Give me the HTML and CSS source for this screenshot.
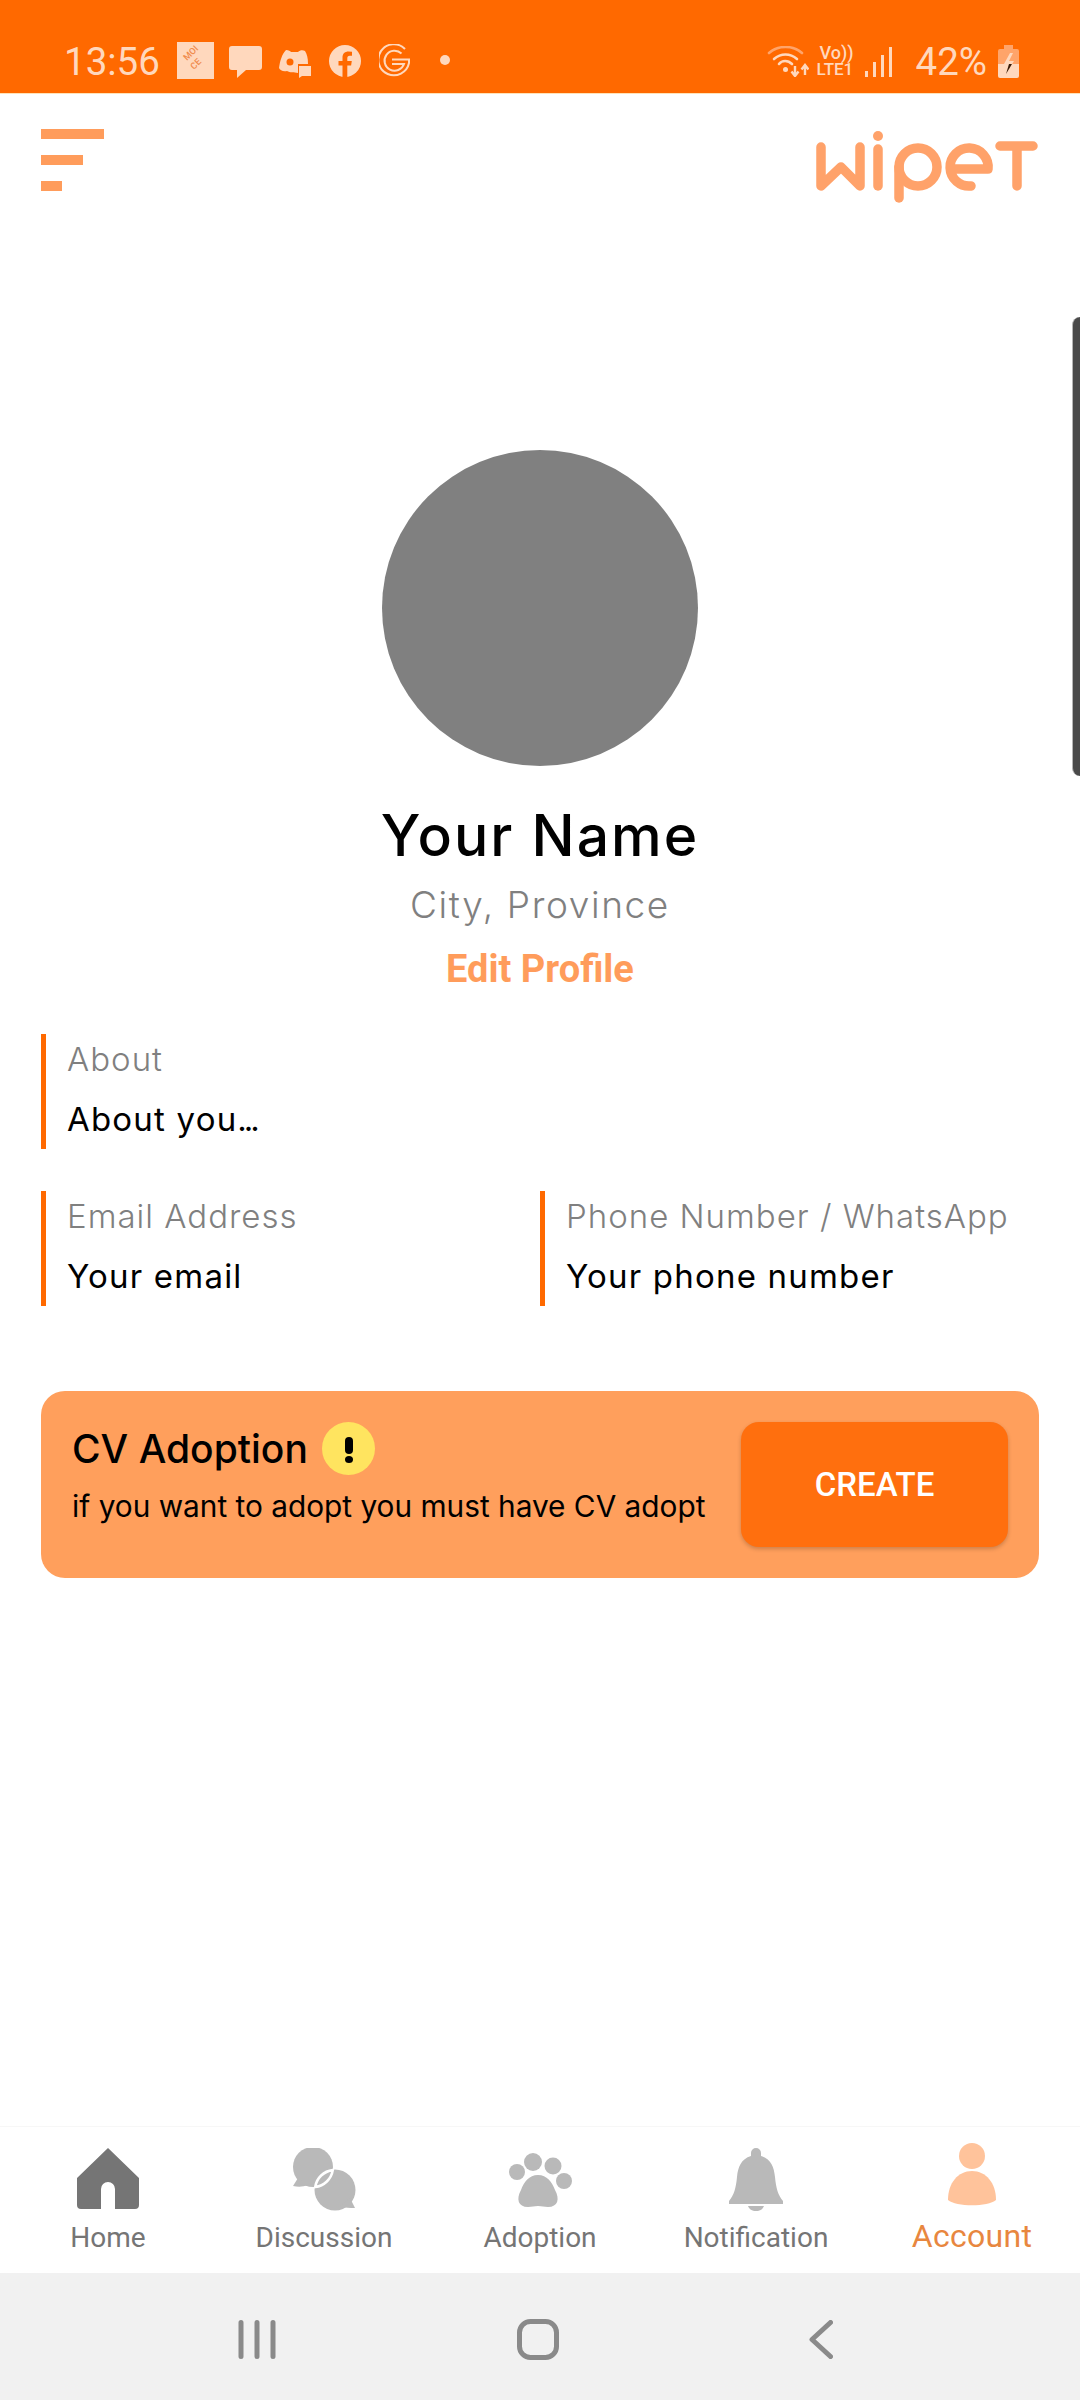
FILE: index.html
```html
<!DOCTYPE html>
<html>
    <head>
        <meta charset="utf-8">
        <title>Wipet Account</title>
        <link rel="stylesheet" href="styles.css">
    </head>
    <body>
        <div class="statusbar">
            <div class="status-left">
                <span class="clock">13:56</span>
                <svg class="ic-moi" width="37" height="37" viewBox="0 0 37 37">
                    <rect width="37" height="37" fill="#FFD8BD"/>
                    <g fill="#F08A4B" font-family="Roboto, sans-serif" font-weight="500" font-size="9">
                        <text transform="translate(10 19) rotate(-45)">MOI</text>
                        <text transform="translate(17 28) rotate(-45)">CE</text>
                    </g>
                </svg>
                <svg class="ic-msg" width="33" height="32" viewBox="0 0 33 32">
                    <path d="M3 0H30a3 3 0 0 1 3 3V21a3 3 0 0 1-3 3H17L8 32V24H3a3 3 0 0 1-3-3V3a3 3 0 0 1 3-3z" fill="#FFD8BD"/>
                </svg>
                <svg class="ic-discord" width="32" height="28" viewBox="0 0 32 28">
                    <path d="M7 0C10 0 11 1 12 2H19C21 0 24 0 26 1C28 4 29 8 29 14H19V23C15 22 11 23 8 21C4 22 1 20 0 18C1 11 3 4 7 0z" fill="#FFD8BD"/>
                    <circle cx="11" cy="12" r="3.500" fill="#FF6900"/>
                    <path d="M20 16H32V26H23L20 28z" fill="#FFD8BD"/>
                </svg>
                <svg class="ic-fb" width="32" height="32" viewBox="0 0 32 32">
                    <circle cx="16" cy="16" r="16" fill="#FFD8BD"/>
                    <path d="M13.500 32V20.500H9.500V16H13.500V12.500C13.500 8.500 16 6.500 19.500 6.500L23 6.800V10.800H20.800C18.800 10.800 18.300 11.800 18.300 13.200V16H22.800L22.100 20.500H18.300V32z" fill="#FF6900"/>
                </svg>
                <svg class="ic-g" width="31" height="34" viewBox="0 0 31 34">
                    <g fill="none" stroke="#FFD8BD" stroke-width="2">
                        <path d="M26 5A15.500 15.500 0 1 0 30 19V15.500H13"/>
                        <path d="M22.500 9.500A10 10 0 1 0 25 20H13"/>
                    </g>
                </svg>
                <span class="notif-dot"></span>
            </div>
            <div class="status-right">
                <svg class="ic-wifi" width="42" height="31" viewBox="0 0 42 31">
                    <g fill="none" stroke-width="2.600" stroke-linecap="round">
                        <path d="M2 7C11-1 26-1 35 7" stroke="#FFA46A"/>
                        <path d="M7 13C14 7 23 7 30 13" stroke="#FFD8BD"/>
                        <path d="M12 18C15 14 21 14 25 18" stroke="#FFD8BD"/>
                    </g>
                    <circle cx="18.500" cy="23.500" r="2.500" fill="#FFD8BD"/>
                    <path d="M28 20V29M24.500 25.500L28 30L31.500 25.500M38 29V20M34.500 23.500L38 19L41.500 23.500" fill="none" stroke="#FFD8BD" stroke-width="2.400"/>
                </svg>
                <div class="volte">
                    <span class="volte-top">Vo))</span>
                    <span class="volte-bot">LTE1</span>
                </div>
                <div class="signal">
                    <i class="sig1"></i><i class="sig2"></i><i class="sig3"></i><i class="sig4"></i>
                </div>
                <span class="battery-pct">42%</span>
                <svg class="ic-batt" width="21" height="33" viewBox="0 0 21 33">
                    <path d="M6 0H15V4H19a2 2 0 0 1 2 2V19H0V6a2 2 0 0 1 2-2H6z" fill="#FFA46A"/>
                    <path d="M0 19H21V31a2 2 0 0 1-2 2H2a2 2 0 0 1-2-2z" fill="#FFD8BD"/>
                    <path d="M12 8L6 19H11L8 29L16 16H11L15 8z" fill="#FFD8BD"/>
                    <path d="M11 19L8 29L14 19z" fill="#3A1C08"/>
                </svg>
            </div>
        </div>

        <div class="topbar">
            <div class="menu-btn">
                <span class="menu-line line-a"></span>
                <span class="menu-line line-b"></span>
                <span class="menu-line line-c"></span>
            </div>
            <!-- logo -->
            <svg class="logo" width="230" height="85" viewBox="810 130 230 85">
                <g fill="none" stroke="#FFA26A" stroke-width="9.500" stroke-linecap="round" stroke-linejoin="round">
                    <path d="M821 152V191L841 172L860 191V152"/>
                    <path d="M878 154V191"/>
                    <circle cx="918" cy="172" r="19"/>
                    <path d="M899 172V203"/>
                    <path d="M951 174H988A19 19 0 1 0 971 191"/>
                    <path d="M1000 151H1033M1017 151V191"/>
                </g>
                <circle cx="878" cy="141" r="5" fill="#FFA26A"/>
            </svg>
        </div>

        <div class="edge-handle"></div>

        <div class="profile">
            <div class="avatar"></div>
            <div class="name">Your Name</div>
            <div class="city">City, Province</div>
            <div class="edit">Edit Profile</div>
        </div>

        <div class="fields">
            <div class="field field-wide">
                <div class="field-label">About</div>
                <div class="field-value">About you<span class="dots">...</span></div>
            </div>
            <div class="field">
                <div class="field-label">Email Address</div>
                <div class="field-value">Your email</div>
            </div>
            <div class="field">
                <div class="field-label">Phone Number / WhatsApp</div>
                <div class="field-value">Your phone number</div>
            </div>
        </div>

        <div class="cv-card">
            <div class="cv-text">
                <div class="cv-title">
                    CV Adoption
                    <span class="cv-warn"><i class="warn-bar"></i><i class="warn-dot"></i></span>
                </div>
                <div class="cv-desc">if you want to adopt you must have CV adopt</div>
            </div>
            <div class="cv-btn">CREATE</div>
        </div>

        <div class="spacer"></div>

        <div class="bottomnav">
            <div class="navitem">
                <div class="navicon">
                    <svg width="62" height="61" viewBox="0 0 62 61">
                        <path d="M31 0L62 30V57a4 4 0 0 1-4 4H38V41a7 7 0 0 0-14 0V61H4a4 4 0 0 1-4-4V30z" fill="#757575"/>
                    </svg>
                </div>
                <span class="navlabel">Home</span>
            </div>
            <div class="navitem">
                <div class="navicon">
                    <svg width="64" height="63" viewBox="0 0 64 63">
                        <g fill="#B9B9B9">
                            <circle cx="21" cy="19" r="20"/>
                            <path d="M6 30L1 38C6 39 11 39 16 37z"/>
                            <circle cx="43" cy="42" r="20.500"/>
                            <path d="M58 50L63 60C58 60 53 60 48 58z"/>
                        </g>
                        <path d="M40.750 22.100A20 20 0 0 1 23.250 38.900A20 20 0 0 1 40.750 22.100z" fill="#B9B9B9" stroke="#FFFFFF" stroke-width="2.600"/>
                    </svg>
                </div>
                <span class="navlabel">Discussion</span>
            </div>
            <div class="navitem">
                <div class="navicon">
                    <svg class="paw" width="65" height="55" viewBox="0 0 65 55">
                        <g fill="#B9B9B9">
                            <circle cx="9" cy="20" r="8"/>
                            <circle cx="25" cy="10" r="9"/>
                            <circle cx="45" cy="14" r="8.500"/>
                            <circle cx="56" cy="29" r="8"/>
                            <path d="M30 23C39 23 44 30 47 38C52 47 50 55 40 55C36 55 34 54 30 54C26 54 24 55 20 55C10 55 8 47 13 38C16 30 21 23 30 23z"/>
                        </g>
                    </svg>
                </div>
                <span class="navlabel">Adoption</span>
            </div>
            <div class="navitem">
                <div class="navicon">
                    <svg width="54" height="63" viewBox="0 0 54 63">
                        <g fill="#B9B9B9">
                            <path d="M22 5a5 5 0 0 1 10 0V8C42 11 45 19 46 29C47 40 49 47 54 53V56H0V53C5 47 7 40 8 29C9 19 12 11 22 8z"/>
                            <path d="M19 58H35C34 61 31 63 27 63C23 63 20 61 19 58z"/>
                        </g>
                    </svg>
                </div>
                <span class="navlabel">Notification</span>
            </div>
            <div class="navitem navitem-on">
                <div class="navicon">
                    <svg class="person" width="48" height="63" viewBox="0 0 48 63">
                        <g fill="#FFC39B">
                            <circle cx="24" cy="13" r="13"/>
                            <path d="M24 28C38 28 48 40 48 57C40 64 8 64 0 57C0 40 10 28 24 28z"/>
                        </g>
                    </svg>
                </div>
                <span class="navlabel">Account</span>
            </div>
        </div>

        <div class="sysbar">
            <svg class="sys-recent" width="38" height="39" viewBox="0 0 38 39">
                <path d="M3 2.500V36.500M19 2.500V36.500M35 2.500V36.500" stroke="#8A8A8A" stroke-width="5" stroke-linecap="round"/>
            </svg>
            <svg class="sys-home" width="42" height="41" viewBox="0 0 42 41">
                <rect x="2.500" y="2.500" width="37" height="36" rx="11" fill="none" stroke="#8A8A8A" stroke-width="5"/>
            </svg>
            <svg class="sys-back" width="24" height="39" viewBox="0 0 24 39">
                <path d="M21.500 2.500L3 19.500L21.500 36.500" fill="none" stroke="#8A8A8A" stroke-width="5" stroke-linecap="round" stroke-linejoin="round"/>
            </svg>
        </div>
    </body>
</html>
```

FILE: styles.css
```css
html, body {
    margin: 0;
    padding: 0;
}

body {
    width: 1080px;
    height: 2400px;
    display: flex;
    flex-direction: column;
    position: relative;
    overflow: hidden;
    background-color: #FFFFFF;
    font-family: "Inter", "Liberation Sans", sans-serif;
    color: #000000;
}

/* status bar */
.statusbar {
    height: 94px;
    flex: none;
    background-color: #FF6900;
    border-bottom: 1px solid #FFE3B8;
    box-sizing: border-box;
    padding: 42px 61px 0 64px;
    display: flex;
    justify-content: space-between;
    align-items: flex-start;
    font-family: "Roboto", sans-serif;
    color: #FFD8BD;
}

.status-left, .status-right {
    display: flex;
    align-items: center;
    height: 40px;
}

.clock {
    font-size: 38.500px;
    width: 113px;
    line-height: 40px;
}

.ic-moi { margin-bottom: 3px; }
.ic-msg { margin-left: 15px; }
.ic-discord { margin-left: 17px; margin-top: 3px; }
.ic-fb { margin-left: 18px; margin-bottom: 3px; }
.ic-g { margin-left: 18px; margin-bottom: 2px; }

.notif-dot {
    width: 10px;
    height: 10px;
    border-radius: 50%;
    background-color: #FFD8BD;
    margin-left: 30px;
    margin-bottom: 4px;
}

.ic-wifi { margin-bottom: 2px; }

.volte {
    margin-left: 8px;
    width: 40px;
    display: flex;
    flex-direction: column;
    font-weight: 500;
    line-height: 16px;
    margin-bottom: 2px;
}

.volte-top {
    font-size: 18px;
    padding-left: 3px;
}

.volte-bot {
    font-size: 17px;
}

.signal {
    display: flex;
    align-items: flex-end;
    gap: 5px;
    height: 30px;
    margin-left: 8px;
}

.signal i {
    display: block;
    width: 3px;
    background-color: #FFD8BD;
}

.sig1 { height: 6px; }
.sig2 { height: 15px; }
.sig3 { height: 22px; }
.sig4 { height: 30px; }

.battery-pct {
    font-size: 38.500px;
    margin-left: 24px;
    line-height: 40px;
}

.ic-batt { margin-left: 11px; margin-bottom: 2px; }

/* top bar */
.topbar {
    flex: none;
    display: flex;
    justify-content: space-between;
    align-items: flex-start;
    padding: 35px 40px 0 41px;
    height: 203px;
    box-sizing: border-box;
}

.menu-btn {
    display: flex;
    flex-direction: column;
    gap: 16px;
}

.menu-line {
    display: block;
    height: 10px;
    background-color: #FF9C5B;
}

.line-a { width: 63px; }
.line-b { width: 42px; }
.line-c { width: 21px; }

.logo {
    margin-top: -4px;
}

/* edge panel handle */
.edge-handle {
    position: absolute;
    top: 317px;
    right: 0;
    width: 8px;
    height: 459px;
    background-color: #4A4A4A;
    border-left: 1px solid #B5B5B5;
    border-radius: 10px 0 0 10px;
    box-sizing: border-box;
}

/* profile head */
.profile {
    flex: none;
    display: flex;
    flex-direction: column;
    align-items: center;
    padding-top: 153px;
}

.avatar {
    width: 316px;
    height: 316px;
    border-radius: 50%;
    background-color: #808080;
}

.name {
    font-size: 57px;
    font-weight: 500;
    line-height: 68px;
    margin-top: 36px;
    letter-spacing: 2px;
}

.city {
    font-size: 37px;
    font-weight: 300;
    color: #808080;
    line-height: 46px;
    margin-top: 12px;
    letter-spacing: 1.6px;
}

.edit {
    font-family: "Roboto", sans-serif;
    font-size: 38px;
    font-weight: 700;
    color: #FF9C5B;
    line-height: 44px;
    margin-top: 19px;
}

/* info fields */
.fields {
    flex: none;
    display: grid;
    grid-template-columns: 499px 499px;
    row-gap: 42px;
    padding: 43px 40px 0 41px;
}

.field {
    height: 115px;
    border-left: 5px solid #FF6900;
    padding-left: 21px;
    box-sizing: border-box;
}

.field-wide {
    grid-column: 1 / 3;
}

.field-label {
    font-size: 33px;
    font-weight: 300;
    color: #808080;
    line-height: 44px;
    padding-top: 3px;
    letter-spacing: 1px;
    white-space: nowrap;
}

.field-value {
    font-size: 33px;
    line-height: 44px;
    margin-top: 16px;
    letter-spacing: 1.2px;
    white-space: nowrap;
}

.dots {
    letter-spacing: -3px;
}

/* cv card */
.cv-card {
    flex: none;
    margin: 85px 41px 0;
    height: 187px;
    box-sizing: border-box;
    padding: 31px 31px 0 31px;
    background-color: #FF9F5C;
    border-radius: 24px;
    display: flex;
    justify-content: space-between;
    align-items: flex-start;
}

.cv-title {
    display: flex;
    align-items: center;
    gap: 14px;
    font-size: 39px;
    font-weight: 500;
    height: 52px;
}

.cv-warn {
    position: relative;
    display: block;
    width: 53px;
    height: 53px;
    border-radius: 50%;
    background-color: #FFE45F;
}

.warn-bar {
    position: absolute;
    left: 23px;
    top: 15px;
    width: 8px;
    height: 17px;
    border-radius: 4px;
    background-color: #000000;
}

.warn-dot {
    position: absolute;
    left: 23px;
    top: 34px;
    width: 8px;
    height: 7px;
    border-radius: 50%;
    background-color: #000000;
}

.cv-desc {
    font-size: 29.800px;
    line-height: 40px;
    margin-top: 12px;
    white-space: nowrap;
}

.cv-btn {
    width: 267px;
    height: 125px;
    border-radius: 18px;
    background-color: #FF6F0E;
    color: #FFFFFF;
    font-family: "Roboto", sans-serif;
    font-size: 33px;
    font-weight: 500;
    display: flex;
    align-items: center;
    justify-content: center;
    box-shadow: 0 2px 4px rgba(0, 0, 0, 0.2);
}

.spacer {
    flex: 1;
}

/* bottom nav */
.bottomnav {
    flex: none;
    height: 147px;
    box-sizing: border-box;
    padding-top: 21px;
    display: grid;
    grid-template-columns: repeat(5, 216px);
    border-top: 1px solid #F7F7F7;
    font-family: "Roboto", sans-serif;
}

.navitem {
    display: flex;
    flex-direction: column;
    align-items: center;
}

.navicon {
    height: 63px;
    display: flex;
    align-items: flex-start;
}

.paw { margin-top: 4px; }
.person { margin-top: -5px; }

.navlabel {
    font-size: 28px;
    color: #757575;
    line-height: 32px;
    margin-top: 11px;
}

.navitem-on .navlabel {
    font-size: 32px;
    color: #E8873F;
    margin-top: 7px;
    line-height: 36px;
    letter-spacing: 0.3px;
}

/* system nav */
.sysbar {
    flex: none;
    height: 127px;
    box-sizing: border-box;
    background-color: #F1F1F1;
    display: flex;
    align-items: center;
    padding: 6px 0 0 238px;
}

.sys-home { margin-left: 241px; }
.sys-back { margin-left: 250px; }
```
